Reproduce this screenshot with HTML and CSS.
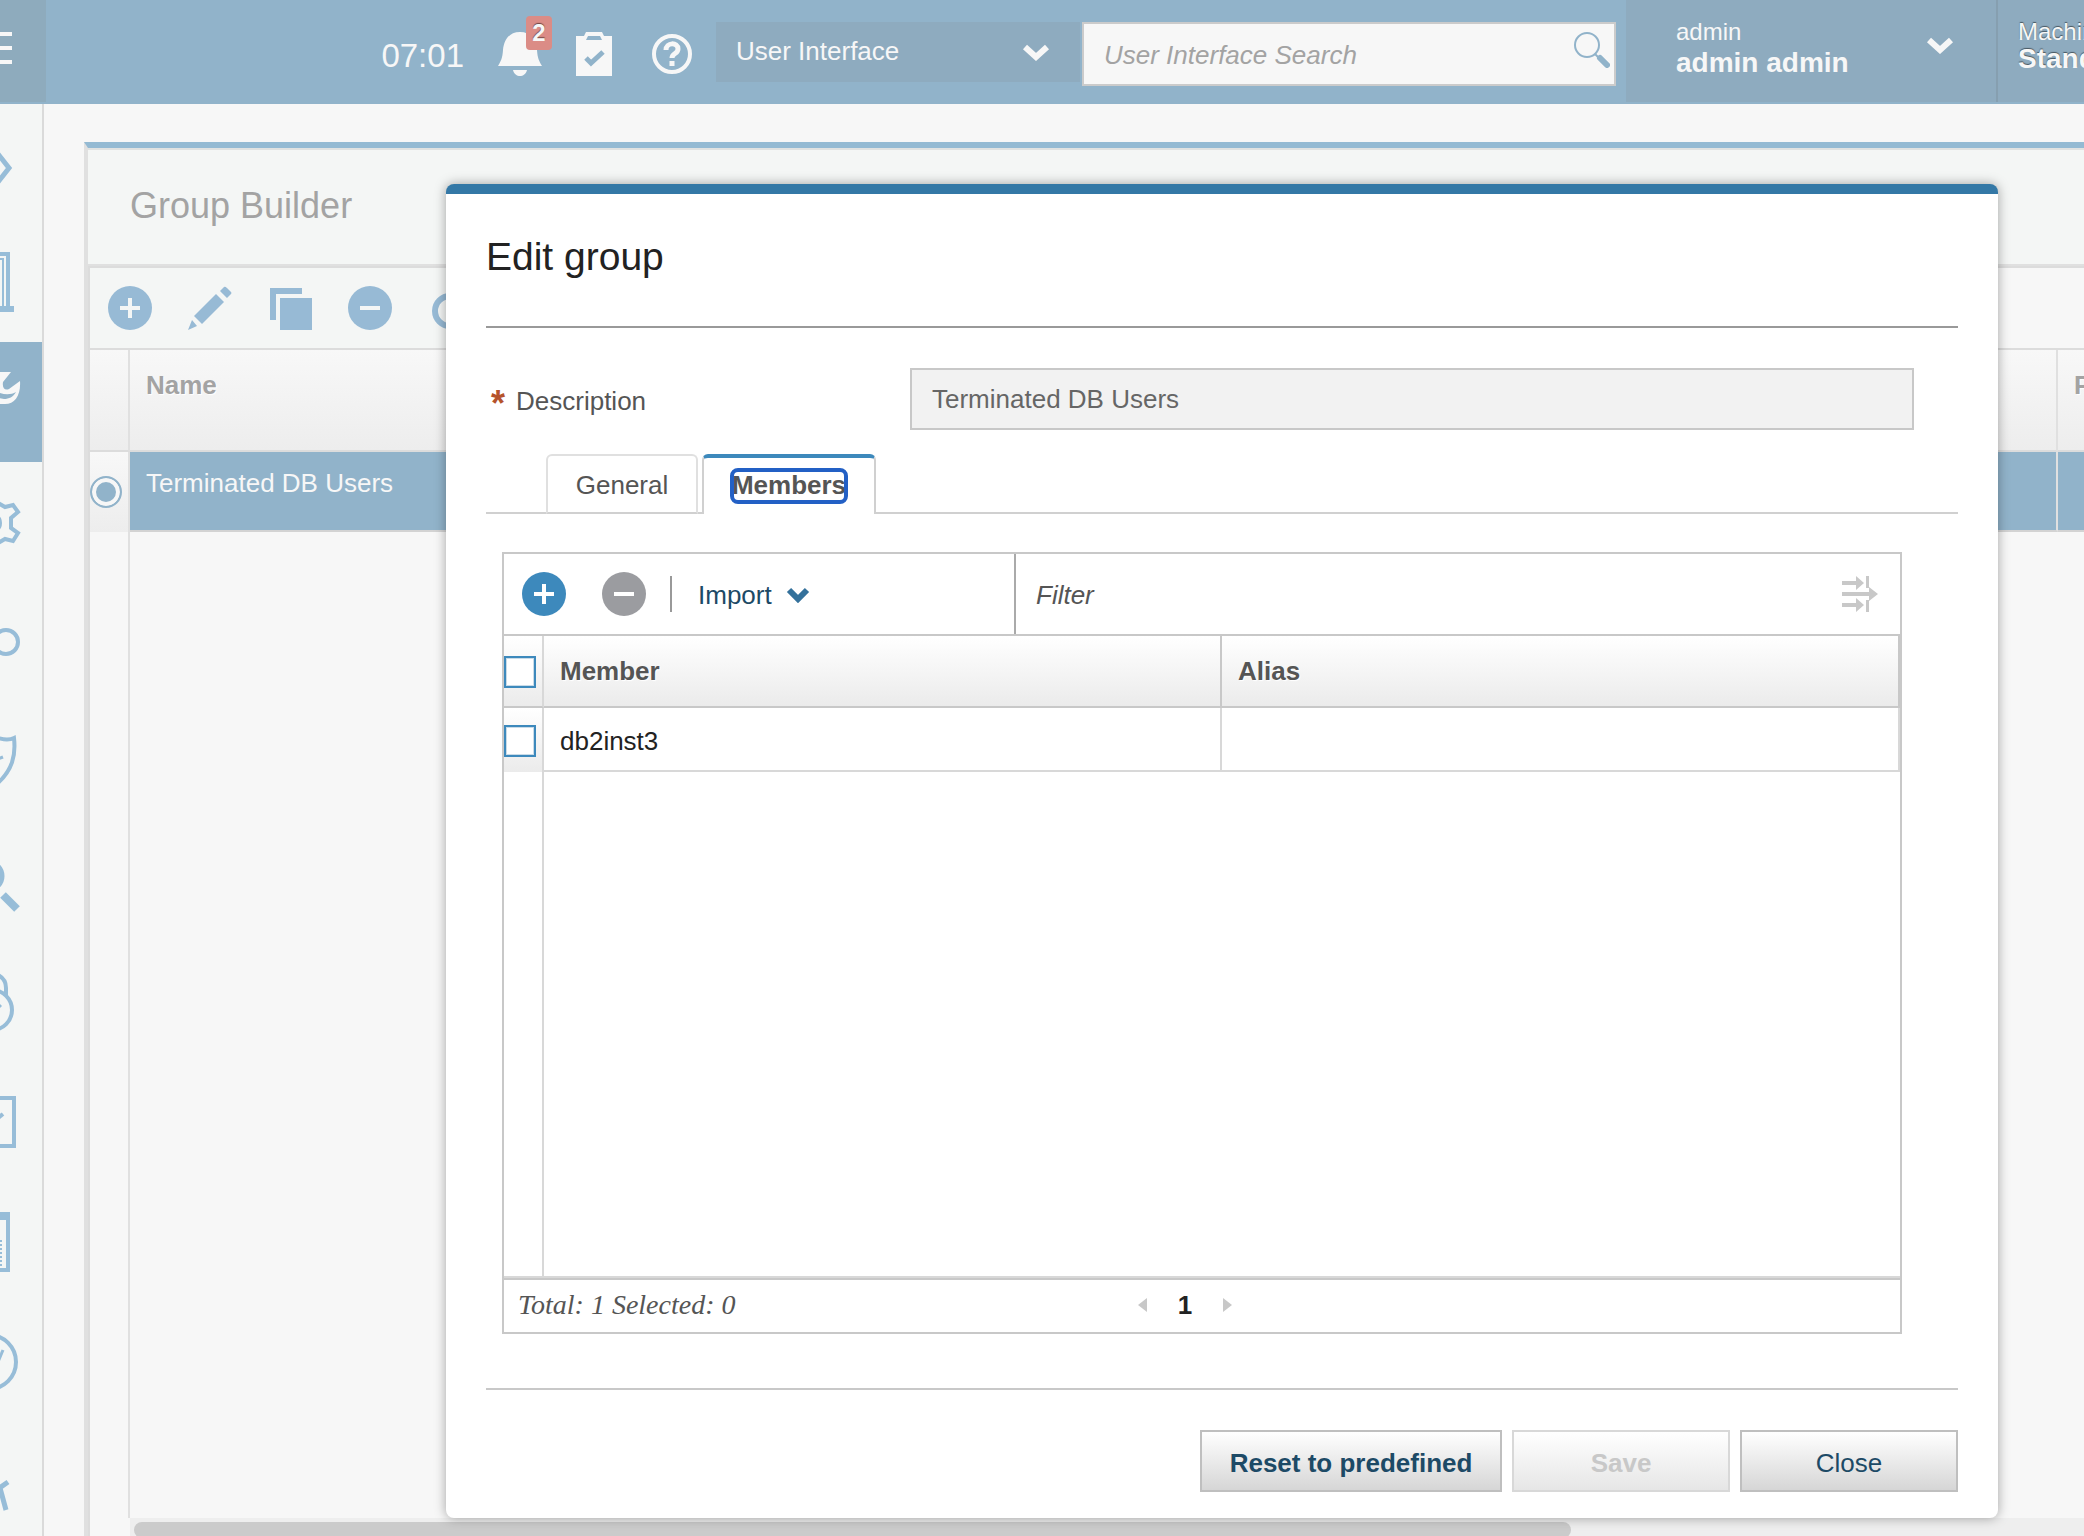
FILE: index.html
```html
<!DOCTYPE html>
<html lang="en">
<head>
  <meta charset="UTF-8">
  <meta name="viewport" content="width=device-width, initial-scale=1.0">
  <title>Group Builder</title>
  <link rel="stylesheet" href="styles.css">
</head>
<body>

  <header class="topbar">
    <button class="menu-toggle" aria-label="Menu">
      <svg width="46" height="102" viewBox="0 0 46 102"><path d="M0 34h12M0 48h12M0 62h12" stroke="#f7f7f7" stroke-width="4"/></svg>
    </button>

    <div class="topbar-status">
      <span class="clock">07:01</span>
      <button class="icon-button bell" aria-label="Notifications">
        <svg width="44" height="44" viewBox="0 0 44 44" fill="#f7f7f7"><path d="M22 0C11 0 6 8 5 18C4.500 26 3 29 0 34H44C41 29 39.500 26 39 18C38 8 33 0 22 0zM15 38h14c-1 4-4 6-7 6s-6-2-7-6z"/></svg>
        <span class="badge">2</span>
      </button>
      <button class="icon-button clipboard" aria-label="Tasks">
        <svg width="36" height="44" viewBox="0 0 36 44"><path d="M0 4H8L10 0H26L28 4H36V44H0z" fill="#f7f7f7"/><path d="M10 8L12 4H24L26 8z" fill="#91b3ca"/><path d="M10 26l5 5L27 20" fill="none" stroke="#91b3ca" stroke-width="5"/></svg>
      </button>
      <button class="icon-button help" aria-label="Help">
        <svg width="40" height="40" viewBox="0 0 40 40" fill="none" stroke="#f7f7f7"><circle cx="20" cy="20" r="18" stroke-width="4"/><path d="M14 16c0-8 12-8 12-1 0 5-6 4-6 9" stroke-width="5"/><path d="M20 27v5" stroke-width="5"/></svg>
      </button>
    </div>

    <div class="scope">
      <select aria-label="Search scope">
        <option>User Interface</option>
      </select>
      <svg class="chevron" width="28" height="18" viewBox="0 0 28 18"><path d="M3 4l11 10L25 4" fill="none" stroke="#f7f7f7" stroke-width="6"/></svg>
    </div>

    <div class="search">
      <input type="text" placeholder="User Interface Search" aria-label="User Interface Search">
      <svg width="36" height="36" viewBox="0 0 36 36" fill="none" stroke="#91b3ca"><circle cx="13" cy="13" r="12" stroke-width="2"/><path d="M21 22l3 3" stroke-width="2"/><path d="M26 26l7 7" stroke-width="6" stroke-linecap="round"/></svg>
    </div>

    <button class="user">
      <span class="user-text">
        <span class="small">admin</span>
        <strong>admin admin</strong>
      </span>
      <svg width="28" height="18" viewBox="0 0 28 18"><path d="M3 4l11 10L25 4" fill="none" stroke="#f7f7f7" stroke-width="6"/></svg>
    </button>

    <div class="machine">
      <span class="small">Machine type</span>
      <strong>Standalone</strong>
    </div>
  </header>

  <div class="shell">
    <nav class="sidebar">
      <a href="#" aria-label="Welcome"><svg viewBox="0 2 42 118"><path d="M-2 52L9 66L-2 80" stroke-width="5"/></svg></a>
      <a href="#" aria-label="Setup"><svg viewBox="0 0 42 120"><path d="M-2 32H8V86" stroke-width="4"/><path d="M-2 37H3V86" stroke-width="2"/><path d="M-2 87H14" stroke-width="6"/></svg></a>
      <a href="#" class="active" aria-label="Manage"><svg viewBox="0 0 42 120"><path d="M-2 30H11L3 40C2 46 5 49 9 47L20 39C21 53 15 62 5 62H-2V56L4 57C9 57 13 55 16 50C11 53 4 53 -2 50z" fill="#f7f7f7" stroke="none"/></svg></a>
      <a href="#" aria-label="Settings"><svg viewBox="0 0 42 120"><path d="M-2 41L5 45L13 43L18 50L11 56V66L18 71L13 79L5 77L-2 81" stroke-width="4"/><ellipse cx="-2" cy="61" rx="3" ry="6" stroke-width="2"/></svg></a>
      <a href="#" aria-label="Discover"><svg viewBox="0 0 42 120"><circle cx="6" cy="60" r="12" stroke-width="4"/></svg></a>
      <a href="#" aria-label="Protect"><svg viewBox="0 0 42 120"><path d="M-2 36Q8 39 14 36C16 54 12 68 -2 81" stroke-width="4"/><path d="M-2 57l5-2" stroke-width="3"/></svg></a>
      <a href="#" aria-label="Investigate"><svg viewBox="0 0 42 120"><circle cx="-12" cy="54" r="14" stroke-width="5"/><path d="M3 73L17 87" stroke-width="8"/></svg></a>
      <a href="#" aria-label="Harden"><svg viewBox="0 0 42 120"><circle cx="-8" cy="68" r="20" stroke-width="4"/><path d="M-2 33Q6 37 6 46V54" stroke-width="4"/><path d="M-2 66l3-3" stroke-width="3"/></svg></a>
      <a href="#" aria-label="Comply"><svg viewBox="0 0 42 120"><path d="M-2 36H14V84H-2" stroke-width="4"/><path d="M-2 56l5-4" stroke-width="4"/></svg></a>
      <a href="#" aria-label="Reports"><svg viewBox="0 0 42 120"><path d="M-2 34H10" stroke-width="8"/><path d="M8 32V88H-2" stroke-width="4"/><path d="M1 58V84" stroke-width="2" stroke-dasharray="2 2"/></svg></a>
      <a href="#" aria-label="Schedule"><svg viewBox="0 0 42 120"><circle cx="-11" cy="60" r="27" stroke-width="4"/><path d="M-2 60L3 48" stroke-width="3"/></svg></a>
      <a href="#" aria-label="Users"><svg viewBox="0 0 42 120"><path d="M8 60L-2 67M0 66L6 88" stroke-width="5"/></svg></a>
    </nav>

    <main class="page">
      <section class="builder">
        <h1>Group Builder</h1>
        <div class="builder-grid">
          <div class="builder-tools">
            <button aria-label="New"><svg width="44" height="44" viewBox="0 0 44 44"><circle cx="22" cy="22" r="22" fill="#97bad5"/><path d="M22 12v20M12 22h20" stroke="#f4f6f5" stroke-width="4"/></svg></button>
            <button aria-label="Edit"><svg width="44" height="44" viewBox="0 0 44 44" fill="#97bad5"><path d="M6 30L28 8L36 16L14 38zM32 5L36 1Q37 0 39 2L43 6Q44 7 43 8L39 12zM4 34L9 40L0 44z"/></svg></button>
            <button aria-label="Clone"><svg width="44" height="44" viewBox="0 0 44 44" fill="#97bad5"><path d="M2 2H34V8H8V34H2zM12 12H44V44H12z"/></svg></button>
            <button aria-label="Delete"><svg width="44" height="44" viewBox="0 0 44 44"><circle cx="22" cy="22" r="22" fill="#97bad5"/><path d="M12 22h20" stroke="#f4f6f5" stroke-width="4"/></svg></button>
            <button aria-label="Refresh"><svg width="44" height="44" viewBox="0 0 44 44"><circle cx="22" cy="25" r="15" fill="none" stroke="#97bad5" stroke-width="6"/></svg></button>
          </div>
          <table class="groups">
            <colgroup><col class="col-pick"><col><col class="col-last"></colgroup>
            <thead>
              <tr><th></th><th>Name</th><th>Predefined</th></tr>
            </thead>
            <tbody>
              <tr class="selected">
                <td><input type="radio" name="group" checked aria-label="Terminated DB Users"></td>
                <td>Terminated DB Users</td>
                <td></td>
              </tr>
              <tr class="filler"><td></td><td></td><td></td></tr>
            </tbody>
          </table>
          <div class="scrollbar"><div class="scroll-thumb"></div></div>
        </div>
      </section>
    </main>
  </div>

  <div class="dialog" role="dialog" aria-labelledby="dialog-title">
    <h2 id="dialog-title">Edit group</h2>

    <div class="field">
      <label for="description"><span class="required">*</span>Description</label>
      <input id="description" type="text" value="Terminated DB Users" readonly>
    </div>

    <div class="tabs" role="tablist">
      <button class="tab" role="tab">General</button>
      <button class="tab current" role="tab" aria-selected="true"><span>Members</span></button>
    </div>

    <div class="members">
      <div class="members-tools">
        <div class="actions">
          <button aria-label="Add"><svg width="44" height="44" viewBox="0 0 44 44"><circle cx="22" cy="22" r="22" fill="#3d89bc"/><path d="M22 12v20M12 22h20" stroke="#fff" stroke-width="4"/></svg></button>
          <button aria-label="Remove" disabled><svg width="44" height="44" viewBox="0 0 44 44"><circle cx="22" cy="22" r="22" fill="#9b9ca0"/><path d="M12 22h20" stroke="#fff" stroke-width="4"/></svg></button>
          <span class="separator"></span>
          <button class="import">Import <svg width="24" height="16" viewBox="0 0 24 16"><path d="M3 3l9 9l9-9" fill="none" stroke="#34719b" stroke-width="6"/></svg></button>
        </div>
        <div class="filter">
          <input type="text" placeholder="Filter" aria-label="Filter">
          <svg width="36" height="36" viewBox="0 0 36 36" fill="#c8c8c8"><path d="M0 5h14V0l8 7l-8 7V9H0zM0 16h27V11l9 7l-9 7v-5H0zM0 27h14v-5l8 7l-8 7v-5H0zM24 0h3v12h-3zM24 24h3v12h-3z"/></svg>
        </div>
      </div>

      <table class="members-table">
        <colgroup><col class="col-check"><col><col></colgroup>
        <thead>
          <tr>
            <th><input type="checkbox" aria-label="Select all"></th>
            <th>Member</th>
            <th>Alias</th>
          </tr>
        </thead>
        <tbody>
          <tr>
            <td><input type="checkbox" aria-label="Select db2inst3"></td>
            <td>db2inst3</td>
            <td></td>
          </tr>
          <tr class="filler"><td></td><td colspan="2"></td></tr>
        </tbody>
      </table>

      <div class="members-footer">
        <span class="total">Total: 1 Selected: 0</span>
        <div class="pager">
          <button aria-label="Previous page"><svg width="10" height="14" viewBox="0 0 10 14"><path d="M9 0v14L0 7z" fill="#c8c8c8"/></svg></button>
          <strong>1</strong>
          <button aria-label="Next page"><svg width="10" height="14" viewBox="0 0 10 14"><path d="M1 0v14l9-7z" fill="#c8c8c8"/></svg></button>
        </div>
      </div>
    </div>

    <div class="dialog-buttons">
      <button class="btn reset">Reset to predefined</button>
      <button class="btn save" disabled>Save</button>
      <button class="btn">Close</button>
    </div>
  </div>

</body>
</html>
```
FILE: styles.css
```css
* {
  box-sizing: border-box;
}

body {
  margin: 0;
  height: 100vh;
  overflow: hidden;
  display: flex;
  flex-direction: column;
  font-family: "Liberation Sans", Arial, Helvetica, sans-serif;
  font-size: 26px;
  background-color: #f7f7f7;
}

button,
input,
select {
  font: inherit;
  color: inherit;
  margin: 0;
}

button {
  padding: 0;
  border: none;
  background: none;
  cursor: pointer;
}

svg {
  display: block;
}

/* top bar */

.topbar {
  display: flex;
  flex: none;
  height: 104px;
  background-color: #91b3ca;
  border-bottom: 2px solid #91b3ca;
  color: #f7f7f7;
}

.menu-toggle {
  background-color: #8eabbd;
}

.topbar-status {
  display: flex;
  align-items: flex-start;
  margin-left: auto;
  margin-right: 24px;
}

.clock {
  font-size: 33px;
  line-height: 40px;
  margin-top: 36px;
  margin-right: 34px;
}

.icon-button {
  margin-top: 32px;
}

.bell {
  position: relative;
  margin-right: 34px;
}

.badge {
  position: absolute;
  top: -16px;
  right: -10px;
  width: 26px;
  height: 34px;
  line-height: 34px;
  border-radius: 4px;
  background-color: #db8c86;
  font-size: 24px;
  font-weight: bold;
  text-align: center;
  text-shadow: 0 -1px 1px rgba(0, 0, 0, 0.5);
}

.clipboard {
  margin-right: 40px;
}

.help {
  margin-top: 34px;
}

.scope {
  position: relative;
  margin-top: 22px;
  width: 364px;
  height: 60px;
}

.scope select {
  width: 100%;
  height: 100%;
  padding: 0 60px 2px 20px;
  border: none;
  border-radius: 0;
  appearance: none;
  background-color: #8eabbf;
}

.scope .chevron {
  position: absolute;
  top: 21px;
  right: 30px;
  pointer-events: none;
}

.search {
  position: relative;
  margin: 22px 10px 0 2px;
  width: 534px;
  height: 64px;
}

.search input {
  width: 100%;
  height: 100%;
  padding: 2px 60px 0 20px;
  border: 2px solid #cbcbcb;
  background-color: #f7f7f7;
  color: #555;
}

.search input::placeholder {
  color: #a3a3a3;
  font-style: italic;
  opacity: 1;
}

.search svg {
  position: absolute;
  top: 10px;
  right: 6px;
}

.user {
  display: flex;
  justify-content: space-between;
  align-items: flex-start;
  width: 372px;
  padding: 18px 42px 0 50px;
  border-right: 2px solid #869fb0;
  background-color: #8eabbf;
  text-align: left;
}

.user svg {
  margin-top: 18px;
}

.topbar .small {
  display: block;
  font-size: 24px;
  line-height: 28px;
}

.topbar strong {
  display: block;
  font-size: 28px;
  line-height: 34px;
}

.topbar .machine {
  width: 86px;
  padding: 18px 0 0 20px;
  background-color: #8eabbf;
  overflow: hidden;
  white-space: nowrap;
  text-shadow: 0 -1px 1px rgba(0, 0, 0, 0.5);
}

.topbar .machine strong {
  line-height: 26px;
}

/* left navigation */

.shell {
  display: flex;
  flex: 1;
  min-height: 0;
}

.sidebar {
  flex: none;
  width: 44px;
  overflow: hidden;
  background-color: #f4f6f5;
  border-right: 2px solid #dadada;
}

.sidebar a {
  display: block;
  height: 120px;
}

.sidebar a:first-child {
  height: 118px;
}

.sidebar a.active {
  background-color: #91b3ca;
}

.sidebar svg {
  width: 100%;
  height: 100%;
  fill: none;
  stroke: #97bdd8;
}

/* group builder page behind the dialog */

.page {
  flex: 1;
  min-width: 0;
  padding: 38px 0 0 40px;
  display: flex;
}

.builder {
  flex: 1;
  min-width: 0;
  display: flex;
  flex-direction: column;
  border-left: 4px solid #e0e0e0;
  border-top: 6px solid #94bad3;
}

.builder h1 {
  margin: 0;
  height: 118px;
  padding-left: 42px;
  border-top: 2px solid #e0e2e1;
  border-bottom: 2px solid #e0e0e0;
  background-color: #f4f6f5;
  color: #a3a3a3;
  font-size: 36px;
  font-weight: normal;
  line-height: 112px;
}

.builder-grid {
  flex: 1;
  display: flex;
  flex-direction: column;
  border: 2px solid #dcdcdc;
  border-width: 2px 0 0 2px;
}

.builder-tools {
  display: flex;
  gap: 36px;
  height: 82px;
  padding: 18px;
  border-bottom: 2px solid #dcdcdc;
  background-color: #f4f6f5;
  background-image: linear-gradient(to right, #f4f6f5 50%, #f7f7f7 50%);
}

.groups {
  flex: 1;
  width: 100%;
  table-layout: fixed;
  border-spacing: 0;
  height: 1166px;
}

.groups .col-pick {
  width: 40px;
}

.groups .col-last {
  width: 26px;
}

.groups th {
  height: 102px;
  padding: 20px 0 0 16px;
  overflow: hidden;
  border-bottom: 2px solid #dcdcdc;
  border-right: 2px solid #e0e0e0;
  background-image: linear-gradient(#f8f8f8, #ededed);
  color: #a3a3a3;
  line-height: 30px;
  text-align: left;
  vertical-align: top;
  text-shadow: 1px 1px 1px #fff;
}

.groups td {
  padding: 16px 0 0 16px;
  border-right: 2px solid #e0e0e0;
  line-height: 30px;
  vertical-align: top;
}

.groups th:last-child,
.groups td:last-child {
  border-right: none;
}

.groups .selected td {
  height: 80px;
  border-bottom: 2px solid #d3d3d3;
  background-color: #91b3ca;
  color: #f7f7f7;
}

.groups .selected td:first-child {
  padding: 24px 0 0;
  border-bottom: none;
  background: linear-gradient(#f8f8f8, #ededed);
}

.groups .filler td:nth-child(2) {
  border-right: none;
}

.groups input {
  display: block;
  appearance: none;
  width: 32px;
  height: 32px;
  border: 2px solid #91b3ca;
  border-radius: 50%;
  background-color: #91b3ca;
  box-shadow: inset 0 0 0 4px #f7f7f7;
}

.scrollbar {
  height: 18px;
  margin-left: 40px;
  padding: 4px 8px 0 4px;
  background-color: #eee;
}

.scroll-thumb {
  width: 74%;
  height: 16px;
  border-radius: 8px;
  background-color: #cbcbcb;
}

/* edit dialog */

.dialog {
  position: absolute;
  top: 184px;
  left: 446px;
  right: 86px;
  padding: 0 40px 26px;
  border-top: 10px solid #3478a6;
  border-radius: 8px;
  background-color: #fff;
  box-shadow: 0 0 12px rgba(0, 0, 0, 0.35);
  color: #555;
}

.dialog h2 {
  margin: 0 0 40px;
  height: 134px;
  border-bottom: 2px solid #999;
  color: #222;
  font-size: 39px;
  font-weight: normal;
  line-height: 126px;
}

.field {
  display: flex;
  align-items: center;
  margin-right: 44px;
}

.field label {
  width: 424px;
  padding: 4px 0 0 5px;
}

.required {
  display: inline-block;
  width: 25px;
  color: #b5532b;
  font-size: 36px;
  font-weight: bold;
  line-height: 26px;
  vertical-align: -6px;
}

.field input {
  flex: 1;
  height: 62px;
  padding: 0 20px;
  border: 2px solid #c8c8c8;
  background-color: #f2f2f2;
  color: #666;
}

.tabs {
  display: flex;
  gap: 4px;
  margin-top: 24px;
  padding-left: 60px;
  box-shadow: inset 0 -2px 0 #d0d0d0;
}

.tab {
  height: 60px;
  width: 152px;
  padding-top: 2px;
  border: 2px solid #e0e0e0;
  border-color: #e0e0e0 #e0e0e0 #d0d0d0;
  border-radius: 6px 6px 0 0;
}

.tab.current {
  width: 174px;
  padding-top: 0;
  border-color: #d0d0d0;
  border-top: 4px solid #3d89bc;
  border-bottom: none;
  background-color: #fff;
  font-weight: bold;
}

.tab.current span {
  display: inline-block;
  height: 32px;
  line-height: 30px;
  outline: 4px solid #2360c5;
  outline-offset: -2px;
  border-radius: 6px;
}

.members {
  margin: 38px 56px 54px 16px;
  border: 2px solid #c8c8c8;
}

.members-tools {
  display: flex;
  height: 82px;
  border-bottom: 2px solid #c8c8c8;
}

.actions {
  display: flex;
  align-items: center;
  width: 512px;
  padding-left: 18px;
  border-right: 2px solid #aaa;
}

.actions button:first-child {
  margin-right: 36px;
}

.separator {
  width: 2px;
  height: 36px;
  margin: 0 26px 0 24px;
  background-color: #999;
}

.import {
  display: flex;
  align-items: center;
  gap: 14px;
  padding-top: 2px;
  color: #1d4a66;
}

.filter {
  flex: 1;
  display: flex;
  align-items: center;
  padding: 0 22px 0 20px;
}

.filter input {
  flex: 1;
  padding: 2px 0 0;
  border: none;
}

.filter input::placeholder {
  color: #555;
  font-style: italic;
  opacity: 1;
}

.members-table {
  width: 100%;
  height: 642px;
  table-layout: fixed;
  border-spacing: 0;
  border-bottom: 2px solid #d8d8d8;
}

.members-table .col-check {
  width: 40px;
}

.members-table th {
  height: 72px;
  padding: 0 16px;
  border-bottom: 2px solid #c8c8c8;
  border-right: 2px solid #c8c8c8;
  background-image: linear-gradient(#fff, #ebebeb);
  text-align: left;
  text-shadow: 1px 1px 1px #fff;
}

.members-table td {
  height: 64px;
  padding: 4px 16px 0;
  border-bottom: 2px solid #d8d8d8;
  border-right: 2px solid #d8d8d8;
  color: #222;
}

.members-table th:first-child,
.members-table td:first-child {
  padding: 2px 0 0;
  border-right-color: #d8d8d8;
}

.members-table td:first-child {
  border-bottom: none;
  background-image: linear-gradient(#fff, #ebebeb);
}

.members-table .filler td {
  height: auto;
  border-bottom: none;
  background: none;
}

.members-table .filler td:last-child {
  border-right: none;
}

.members-table input {
  display: block;
  appearance: none;
  width: 32px;
  height: 32px;
  border: 2px solid #3d89bc;
  background-color: #fff;
  box-shadow: inset 0 0 0 1px #c9dbe8;
}

.members-footer {
  display: flex;
  align-items: center;
  position: relative;
  height: 54px;
  padding: 0 14px 2px;
  border-top: 2px solid #c8c8c8;
}

.total {
  font-family: Georgia, "Liberation Serif", serif;
  font-size: 28px;
  font-style: italic;
}

.pager {
  position: absolute;
  left: 0;
  right: 0;
  display: flex;
  align-items: center;
  justify-content: center;
  gap: 30px;
  padding-right: 34px;
}

.pager strong {
  color: #222;
}

.dialog-buttons {
  display: flex;
  justify-content: flex-end;
  gap: 10px;
  padding-top: 40px;
  border-top: 2px solid #c8c8c8;
}

.btn {
  width: 218px;
  height: 62px;
  padding-top: 4px;
  border: 2px solid #bfbfbf;
  background-image: linear-gradient(#fff, #d6d6d6);
  color: #1d4a66;
}

.btn.reset {
  width: 302px;
  font-weight: bold;
}

.btn.save {
  border-color: #d8d8d8;
  background-image: linear-gradient(#fff, #e6e6e6);
  color: #c8c8c8;
  font-weight: bold;
}
```
